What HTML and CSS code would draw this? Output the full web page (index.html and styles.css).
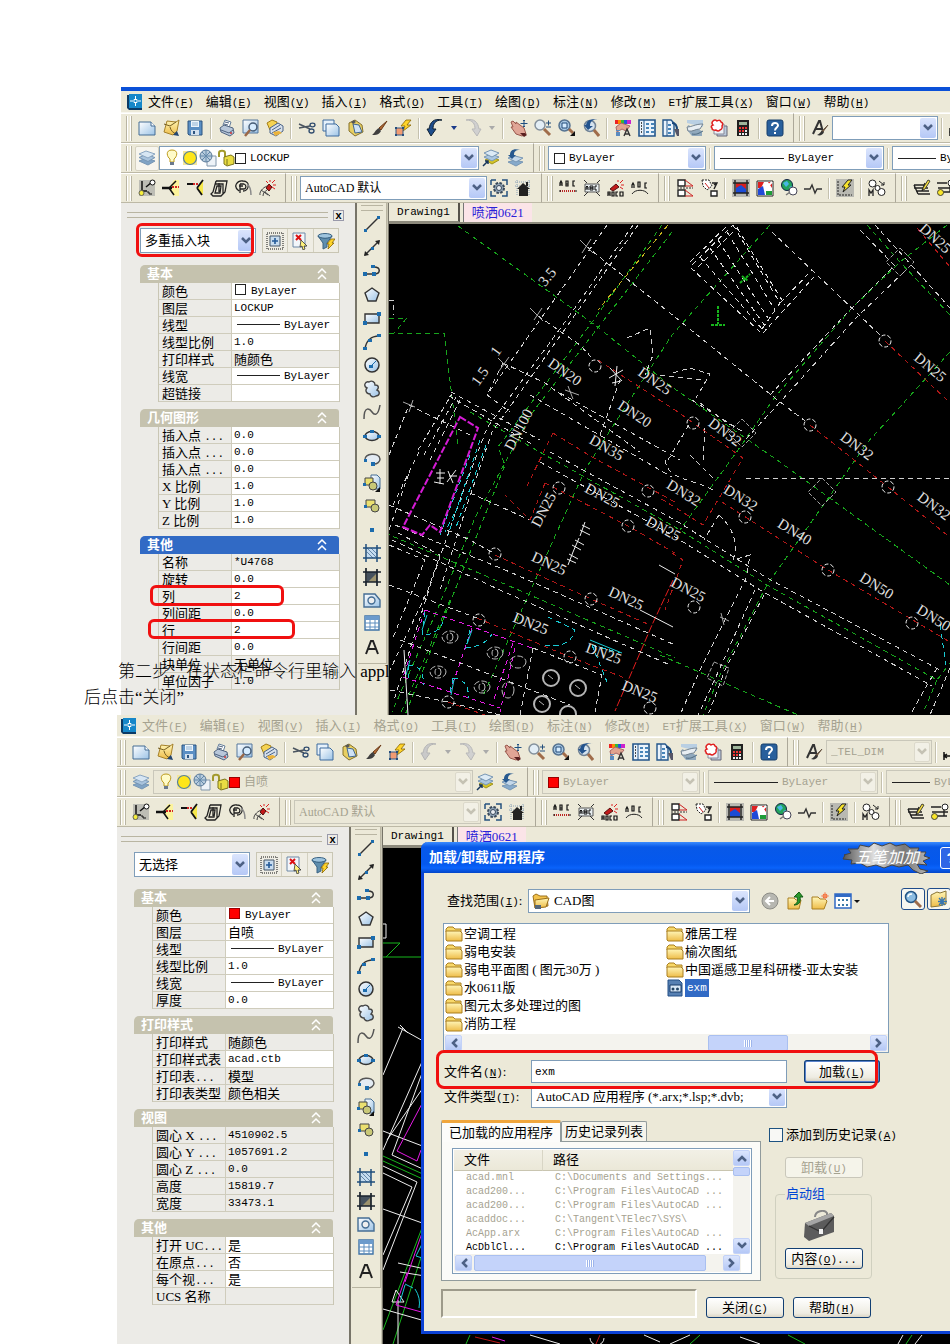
FILE: index.html
```html
<!DOCTYPE html>
<html lang="zh-CN">
<head>
<meta charset="utf-8">
<title>AutoCAD 加载应用程序</title>
<link rel="stylesheet" href="styles.css">
</head>
<body>
<svg class="defs" aria-hidden="true">
<defs>
<linearGradient id="gb" x1="0" y1="0" x2="1" y2="1"><stop offset="0" stop-color="#fff"/><stop offset="1" stop-color="#9cc3e6"/></linearGradient>
<linearGradient id="gf" x1="0" y1="0" x2="0" y2="1"><stop offset="0" stop-color="#fff6b8"/><stop offset="1" stop-color="#eebc48"/></linearGradient>
<linearGradient id="gc" x1="0" y1="0" x2="1" y2="0"><stop offset="0" stop-color="#555"/><stop offset=".35" stop-color="#ddd"/><stop offset=".7" stop-color="#777"/><stop offset="1" stop-color="#bbb"/></linearGradient>
<symbol id="i-app" viewBox="0 0 18 18"><path d="M2 2h13l2 2v13H4l-2-2z" fill="#0b3a66"/><rect x="4" y="1" width="13" height="14" fill="#1687c9"/><path d="M10.500 3v3M10.500 10v3M5 8h3M13 8h3M9 6.500h3v3H9z" stroke="#fff" fill="none"/></symbol>
<symbol id="i-new" viewBox="0 0 18 18"><path d="M1 3h12l4 4v9H1z" fill="url(#gb)" stroke="#456d94"/><path d="M13 3v4h4" fill="#fff" stroke="#456d94"/></symbol>
<symbol id="i-open" viewBox="0 0 18 18"><path d="M5 2l9 1 3-2-2 11-4 4-9-3z" fill="url(#gf)" stroke="#a5812a"/><path d="M2 5l6 2 6-4M8 8c1 4 3 6 7 7" stroke="#765f22" fill="none"/><path d="M11 16l6 1-2-5z" fill="#244771"/></symbol>
<symbol id="i-save" viewBox="0 0 18 18"><path d="M2 2h14v14H3l-1-1z" fill="#5b8fc4" stroke="#2c5480"/><path d="M5 2h8v6H5z" fill="#eef5fb"/><path d="M5 11h8v5H5z" fill="#d3e0ed"/><path d="M7 12h2v3H7z" fill="#2c5480"/><path d="M6 4h6M6 6h6" stroke="#8fb2d3"/></symbol>
<symbol id="i-print" viewBox="0 0 18 18"><path d="M5 6l2-5 6 2-2 6z" fill="#fff" stroke="#667f9c"/><path d="M2 9l4-3 9 3 1 5-4 3-9-4z" fill="#b8c7da" stroke="#506480"/><path d="M3 11l8 3 4-3M7 3l4 1M6 5l4 1" stroke="#506480" fill="none"/><circle cx="13" cy="14" r="1" fill="#c33"/></symbol>
<symbol id="i-preview" viewBox="0 0 18 18"><path d="M1 1h15v13H1z" fill="url(#gb)" stroke="#55779c"/><circle cx="11" cy="8" r="4" fill="#d6ecff" stroke="#465d78" stroke-width="1.500"/><path d="M8 11l-5 6" stroke="#9b6847" stroke-width="2.500"/></symbol>
<symbol id="i-publish" viewBox="0 0 18 18"><path d="M1 4l5-3 5 2-1 6-6 2z" fill="#f5d352" stroke="#a37d16"/><path d="M4 9l8-5 5 3v5l-7 5-6-3z" fill="#d7e0eb" stroke="#4a6387"/><path d="M6 11l8-5M6 14l9-5" stroke="#4a6387"/><path d="M7 13l6-1 3 2-7 3z" fill="#ecb33a"/></symbol>
<symbol id="i-cut" viewBox="0 0 18 18"><path d="M1 5l11 5M1 9l11-2" stroke="#4b5560" stroke-width="1.500"/><ellipse cx="14.500" cy="6" rx="2.500" ry="1.800" fill="none" stroke="#304c6e" stroke-width="1.300"/><ellipse cx="13.500" cy="12" rx="2.500" ry="2" fill="none" stroke="#304c6e" stroke-width="1.300"/></symbol>
<symbol id="i-copy" viewBox="0 0 18 18"><path d="M1 1h11v11H1z" fill="#e6f1fb" stroke="#3c6b9e"/><path d="M4 5h10l3 3v9H4z" fill="url(#gb)" stroke="#3c6b9e"/></symbol>
<symbol id="i-paste" viewBox="0 0 18 18"><path d="M3 4l6-3 7 5 1 7-8 4-6-5z" fill="#e8cf62" stroke="#85702a"/><path d="M7 5l6 1 3 7-7 1z" fill="#cfe2f5" stroke="#3f658d"/><path d="M5 3l3-2 2 2-3 2z" fill="#555"/></symbol>
<symbol id="i-brush" viewBox="0 0 18 18"><path d="M17 2L9 9l2 2z" fill="#b36a35" stroke="#6b3a17"/><path d="M9 9l2 3c-2 4-5 4-9 4 3-2 3-5 7-7z" fill="#3f3f3f"/></symbol>
<symbol id="i-bolt" viewBox="0 0 18 18"><path d="M12 1h5l-4 5h4l-8 6 2-5H7z" fill="#ffd42a" stroke="#886400" stroke-width=".8"/><path d="M2 9h7v7H2z" fill="#f29b72" stroke="#355b86"/><path d="M1 8h2v2H1zM8 8h2v2H8zM1 15h2v2H1zM8 15h2v2H8z" fill="#244c7d"/></symbol>
<symbol id="i-undo" viewBox="0 0 18 18"><path d="M16 1C9 1 7 5 7 10h3l-5 7-4-7h2C4 3 8-1 16 1z" fill="#1d4d8c" stroke="#123"/></symbol>
<symbol id="i-undo-off" viewBox="0 0 18 18"><path d="M16 1C9 1 7 5 7 10h3l-5 7-4-7h2C4 3 8-1 16 1z" fill="#c9c9c9" stroke="#b5b5b5"/></symbol>
<symbol id="i-redo" viewBox="0 0 18 18"><path d="M2 1c7 0 9 4 9 9H8l5 7 4-7h-2c-1-7-5-11-13-9z" fill="#d0d0d0" stroke="#b9b9b9"/></symbol>
<symbol id="i-drop" viewBox="0 0 18 18"><path d="M6 7h6l-3 4z" fill="#1a3a8a"/></symbol>
<symbol id="i-drop-off" viewBox="0 0 18 18"><path d="M6 7h6l-3 4z" fill="#aaa"/></symbol>
<symbol id="i-pan" viewBox="0 0 18 18"><path d="M1 3l2-1 3 3 0-2 4 3 4 3 2 6-4 2-6-2-5-7 2 0z" fill="#e0a596" stroke="#99584d"/><path d="M10 14l5 0 2 2-3 2z" fill="#5a2020"/><path d="M14 1v7M10.500 4.500h7M13 2l1-1 1 1M13 7l1 1 1-1" stroke="#1f4f80" fill="none"/></symbol>
<symbol id="i-zoom" viewBox="0 0 18 18"><circle cx="6" cy="6" r="5" fill="#e3eef6" stroke="#83909c" stroke-width="1.500"/><path d="M10 10l6 6" stroke="#a06c4a" stroke-width="3"/><path d="M12 4h5M14.500 1.500v5M12 8h5" stroke="#244f7c"/></symbol>
<symbol id="i-zoomwin" viewBox="0 0 18 18"><circle cx="6.500" cy="6.500" r="5.500" fill="#a9c9e5" stroke="#567391" stroke-width="1.500"/><path d="M4 4h5v5H4z" fill="#d5ecff" stroke="#234a78"/><path d="M11 10l4 4" stroke="#a06c4a" stroke-width="3"/><path d="M17 12v5h-5z" fill="#111"/></symbol>
<symbol id="i-zoomprev" viewBox="0 0 18 18"><circle cx="8" cy="7" r="5.500" fill="#d5e3ef" stroke="#718396" stroke-width="1.500"/><path d="M17 1c-7-1-9 2-9 6h3l-5 4-4-5h2c1-5 5-7 13-5z" fill="#23538d"/><path d="M12 11l5 6" stroke="#a06c4a" stroke-width="3"/></symbol>
<symbol id="i-props" viewBox="0 0 18 18"><path d="M1 1h3v4H1z" fill="#e22"/><path d="M4 1h3v4H4z" fill="#f80"/><path d="M7 1h3v4H7z" fill="#3b3"/><path d="M10 1h3v4h-3z" fill="#25d"/><path d="M13 1h4v4h-4z" fill="#c2c"/><path d="M2 8l5-4 9 3-4 5-4-2-5 3z" fill="#e2a48f" stroke="#a66"/><path d="M10 17l3-7 3 7M11 15h4" stroke="#333" fill="none" stroke-width="1.400"/><path d="M2 11h4v1H2zM2 13h4v4H2z" fill="#5a8bc0"/></symbol>
<symbol id="i-dc" viewBox="0 0 18 18"><path d="M1 1h16v16H1z" fill="#eaf3fc" stroke="#23568b" stroke-width="1.600"/><path d="M6 1v16" stroke="#23568b"/><path d="M3 4h1M3 7h1M3 10h1M3 13h1" stroke="#111" stroke-width="1.500"/><path d="M8 4h3v2H8zM13 4h3v2h-3zM8 8h3v2H8zM13 8h3v2h-3zM8 12h3v2H8zM13 12h3v2h-3z" fill="#4684b9"/></symbol>
<symbol id="i-tp" viewBox="0 0 18 18"><path d="M1 1h8l3 3v13H1z" fill="#eaf3fc" stroke="#23568b" stroke-width="1.400"/><path d="M5 1v16" stroke="#23568b"/><path d="M6 5h3v2H6zM6 9h3v2H6zM6 13h3v2H6z" fill="#4684b9"/><path d="M10 4c4 0 5 3 5 7" stroke="#1a477a" fill="none" stroke-width="2"/><path d="M12 10h5v7h-2z" fill="#556"/></symbol>
<symbol id="i-sheet" viewBox="0 0 18 18"><path d="M1 1h16v7L1 4z" fill="#b9cfe3"/><path d="M2 6l14 6v5H6L1 11z" fill="#91a9bd"/><path d="M1 8c5 0 8-3 16-3l-3 5c-5 0-7 3-12 2z" fill="#e8eef3" stroke="#738391"/><path d="M6 15c5 1 7-1 11-3" stroke="#4e6a80" fill="none"/></symbol>
<symbol id="i-markup" viewBox="0 0 18 18"><path d="M7 7h10v10H7z" fill="#bccbdc" stroke="#667"/><path d="M4 5h10v10H4z" fill="#eef3f8" stroke="#889"/><path d="M3 2c2-2 4 0 4 0s3-2 4 1c3 1 1 4 1 4s1 3-2 4c-2 2-4 0-4 0s-4 1-4-2c-2-2 1-3 1-3s-2-2 0-4z" fill="#fff" stroke="#e02020" stroke-width="1.500"/></symbol>
<symbol id="i-calc" viewBox="0 0 18 18"><path d="M3 1h12v16H3z" fill="#202020"/><path d="M5 3h8v3H5z" fill="#9eb59b"/><path d="M5 8h2v2H5zM8 8h2v2H8zM11 8h2v2h-2zM5 11h2v2H5zM8 11h2v2H8z" fill="#e33"/><path d="M11 11h2v2h-2zM5 14h2v2H5zM8 14h2v2H8zM11 14h2v2h-2z" fill="#eee"/></symbol>
<symbol id="i-help" viewBox="0 0 18 18"><rect x="1" y="1" width="16" height="16" rx="2" fill="#285f9c" stroke="#173e6b"/><path d="M6 7c0-4 6-4 6-.500 0 2-3 2-3 5M9 13v2" fill="none" stroke="#fff" stroke-width="2"/></symbol>
<symbol id="i-style" viewBox="0 0 18 18"><path d="M2 15L8 2h1l3 11M4 10h7" fill="none" stroke="#333" stroke-width="2"/><path d="M17 6l-7 7 1 1z" fill="#b36a35" stroke="#654"/><path d="M11 12c-2 1-2 3-5 4 3 1 6 0 7-3z" fill="#333"/></symbol>
<symbol id="i-dim" viewBox="0 0 18 18"><path d="M1 9v8M1 13h15M4 11l-3 2 3 2" stroke="#111" stroke-width="1.500" fill="none"/></symbol>
<symbol id="i-layers" viewBox="0 0 18 18"><path d="M1 12l7-3 9 3-7 4z" fill="#7fa3c5" stroke="#7796b4"/><path d="M1 8.500l7-3 9 3-7 4z" fill="#a8c3dd" stroke="#7796b4"/><path d="M1 5l7-3 9 3-7 4z" fill="#d7e6f3" stroke="#8aa6c2"/></symbol>
<symbol id="i-bulb" viewBox="0 0 18 18"><path d="M9 1c-7 0-5 7-2 9v3h4v-3c3-2 5-9-2-9z" fill="#fffbc9" stroke="#bd9b1c"/><path d="M7 13h4v3H7z" fill="#6a788c"/></symbol>
<symbol id="i-sun" viewBox="0 0 18 18"><path d="M2 2h14v14H2z" fill="#f4e79b"/><circle cx="9" cy="9" r="6.500" fill="#ffe619" stroke="#557f9f" stroke-width="1.200"/></symbol>
<symbol id="i-freeze" viewBox="0 0 18 18"><path d="M8 7h9v10H8z" fill="#eef3f8" stroke="#8196ab"/><circle cx="7" cy="7" r="6" fill="#b7cbdc" stroke="#5b7a98"/><path d="M7 1v12M1 7h12M3 3l8 8M11 3l-8 8" stroke="#6388aa"/></symbol>
<symbol id="i-lock" viewBox="0 0 18 18"><path d="M2 8V4c0-3 6-3 6 0v6" fill="none" stroke="#a39a2c" stroke-width="2"/><path d="M7 8l7-2 3 2v7l-7 2-3-2z" fill="#e9dc42" stroke="#7b741c"/><path d="M10 10v6" stroke="#7b741c"/></symbol>
<symbol id="i-laycur" viewBox="0 0 18 18"><path d="M3 11l7-3 7 3-7 4z" fill="#d6c526" stroke="#a0941f"/><path d="M2 8l7-3 8 3-7 4z" fill="#aac6e0" stroke="#7796b4"/><path d="M2 4l7-3 8 3-7 4z" fill="#dceaf5" stroke="#7796b4"/><path d="M1 17l5-5M3 12h3v3" stroke="#17365c" stroke-width="1.500" fill="none"/></symbol>
<symbol id="i-layprev" viewBox="0 0 18 18"><path d="M2 13l7-2 8 2-7 4z" fill="#86aacb" stroke="#7796b4"/><path d="M2 9l7-2 8 2-7 4z" fill="#c4d8ea" stroke="#7796b4"/><path d="M14 1c-5 0-6 2-6 5h2l-4 4-4-4h2c0-5 4-7 10-5z" fill="#27598f"/></symbol>
<symbol id="i-t1" viewBox="0 0 18 18"><path d="M1 1h16v16H1z" fill="#bdbdb5"/><path d="M4 2v10h5M8 8l6-5" stroke="#111" stroke-width="1.500" fill="none"/><circle cx="14.500" cy="3.500" r="2.500" fill="#fff" stroke="#111"/><circle cx="3.500" cy="14" r="2.500" fill="#f7ef3b" stroke="#665"/><path d="M9 13h2v2h3" stroke="#111" fill="none"/></symbol>
<symbol id="i-t2" viewBox="0 0 18 18"><path d="M12 1L7 9l5 8h5V1z" fill="#fcf39b"/><path d="M0 9h10" stroke="#111" stroke-width="2.500"/><path d="M14 2L7 9l5 7" stroke="#111" stroke-width="1.500" fill="none"/><path d="M10 8h7" stroke="#d32424" stroke-width="2" stroke-dasharray="2 1"/></symbol>
<symbol id="i-t3" viewBox="0 0 18 18"><path d="M17 1l-5 8 3 7 2-1z" fill="#f6e84c"/><path d="M1 5h6M11 9l5 7M17 1l-6 8" stroke="#111" stroke-width="1.800"/><path d="M7 5h6" stroke="#d32424" stroke-width="2" stroke-dasharray="2 1"/></symbol>
<symbol id="i-t4" viewBox="0 0 18 18"><path d="M6 2h11l-2 11-2 2M6 2L3 13l-2 2 2 2h8l2-2V5H5M7 7h4l-1 7H5zM9 4v9" stroke="#222" fill="none" stroke-width="1.300"/></symbol>
<symbol id="i-t5" viewBox="0 0 18 18"><path d="M5 12C-2 7 4 1 9 2c8 0 6 10 0 10M6 5v9M6 5h4c3 1 2 5 0 5H6M9 7H5" stroke="#222" fill="none" stroke-width="1.300"/><path d="M13 5c3 2 4 6 4 11" stroke="#8b8b8b" fill="none" stroke-width="1.500"/></symbol>
<symbol id="i-t6" viewBox="0 0 18 18"><path d="M2 16c-1-4 5-9 8-9M5 17c0-3 2-5 4-6M7 13l5 4M3 11l7 5" stroke="#444" fill="none"/><path d="M8 9l3-4 3 3-3 4z" fill="#c21919" stroke="#511"/><path d="M12 3V1M14 4l3-3M15 6h3M14 8l3 2M10 4L8 2" stroke="#d22"/></symbol>
<symbol id="i-gear" viewBox="0 0 18 18"><path d="M1 1h5M1 1v5M12 1h5v5M1 12v5h5M17 12v5h-5" stroke="#24517f" stroke-width="1.500" fill="none"/><circle cx="9" cy="9" r="5" fill="#93a7b9" stroke="#39495a" stroke-width="2" stroke-dasharray="2.500 1.400"/><circle cx="9" cy="9" r="2.500" fill="#e9eef2" stroke="#39495a"/></symbol>
<symbol id="i-home" viewBox="0 0 18 18"><path d="M1 3h16M1 7h16M3 1v16M15 1v16" stroke="#8aa1b6" stroke-dasharray="1 1"/><path d="M9 4L3 10h2v7h9v-7h2z" fill="#222"/><path d="M12 3h2v4h-2z" fill="#222"/></symbol>
<symbol id="i-abc1" viewBox="0 0 18 18"><path d="M1 7V4l1-2 1 2v3M1 5h2M7 2v5h2V5H7h2V2zM16 2h-2v5h2" stroke="#111" fill="none" stroke-width="1.200"/><path d="M1 12h16" stroke="#b22" stroke-width="2" stroke-dasharray="1 1"/><path d="M1 11v2M17 11v2" stroke="#111"/></symbol>
<symbol id="i-abc2" viewBox="0 0 18 18"><path d="M2 5h14v8H2z" fill="#e8eef0" stroke="#555"/><path d="M3 11V8l1-1 1 1v3M3 9h2M7 7v4h3V9H7h3V7zM14 7h-2v4h2" stroke="#111" fill="none"/><path d="M1 1l3 3M17 1l-3 3M1 17l4-4M17 17l-4-4" stroke="#333"/></symbol>
<symbol id="i-abc3" viewBox="0 0 18 18"><path d="M3 10l6-5 3 3-6 4z" fill="#c21919" stroke="#511"/><path d="M11 3V1M13 4l3-3M14 6h3M13 8l3 2" stroke="#d22"/><path d="M1 17v-4h2v4M1 15h2M5 13v4h2v-4zM11 13H9v4h2M13 13v4h3v-4z" stroke="#111" fill="none" stroke-width="1.200"/></symbol>
<symbol id="i-abc4" viewBox="0 0 18 18"><path d="M1 9V6l1-2 1 2v3M7 3v5h2V3zM16 4h-2v5h2" stroke="#111" fill="none" stroke-width="1.200"/><path d="M1 15c3-5 13-5 16 0" stroke="#222" fill="none"/></symbol>
<symbol id="i-mir" viewBox="0 0 18 18"><path d="M2 1h7v6H2zM2 11h7v6H2z" fill="#fff" stroke="#222" stroke-width="1.400"/><path d="M9 1l8 6H9M9 11l8 6H9" stroke="#c22" fill="none"/><path d="M1 9h16" stroke="#333" stroke-dasharray="2 1"/></symbol>
<symbol id="i-rot" viewBox="0 0 18 18"><path d="M2 1l7 0 3 6-5 4-4-4z" fill="#fff" stroke="#222" stroke-dasharray="2 1"/><path d="M5 4l4 5" stroke="#c22"/><path d="M11 12h6v5h-6z" fill="#fff" stroke="#222" stroke-width="1.400"/><path d="M14 10l3-6-5 0M17 4l-3 2" stroke="#222" fill="none" stroke-width="1.400"/></symbol>
<symbol id="i-img1" viewBox="0 0 18 18"><path d="M0 0h18v18H0z" fill="#b9b9b2"/><path d="M4 4h10v10H4z" fill="#d91d1d"/><path d="M4 9l5-3 5 4v4H4z" fill="#1b4bd6"/><path d="M3 1v16M15 1v16M1 4h16M1 14h16" stroke="#222" stroke-width="1.400"/></symbol>
<symbol id="i-img2" viewBox="0 0 18 18"><path d="M1 2h16v15H1z" fill="#fff" stroke="#222"/><path d="M2 3h6l-3 6H2zM12 3h4v6z" fill="#dd2020"/><path d="M2 10l5-3 2 9H2z" fill="#2049d8"/><path d="M10 12h6v4h-6z" fill="#1d9c38"/><path d="M9 10l7-7" stroke="#fff" stroke-width="2"/></symbol>
<symbol id="i-globe" viewBox="0 0 18 18"><circle cx="7" cy="6" r="5.500" fill="#23a35c" stroke="#124"/><path d="M3 4l4-2 2 3-3 3zM9 8l3-1-1 3z" fill="#47b7e6"/><circle cx="13" cy="12" r="4" fill="#fff" stroke="#445"/><path d="M10 13l-4 3" stroke="#777" stroke-width="1.500"/></symbol>
<symbol id="i-pulse" viewBox="0 0 18 18"><path d="M0 10h6l2-4 3 8 2-4h5" fill="none" stroke="#333" stroke-width="1.400"/></symbol>
<symbol id="i-flash" viewBox="0 0 18 18"><path d="M0 0h18v18H0z" fill="#b9b9b2"/><path d="M2 2v14h14" stroke="#222" stroke-dasharray="2 1" fill="none"/><path d="M12 1h4l-4 5h3l-8 7 2-5H6z" fill="#f8e42a" stroke="#222"/></symbol>
<symbol id="i-mo" viewBox="0 0 18 18"><circle cx="4.500" cy="4.500" r="3.500" fill="#fff" stroke="#222"/><path d="M1 17v-6l2 3 2-3v6" fill="none" stroke="#222" stroke-width="1.300"/><circle cx="13.500" cy="13" r="3.500" fill="#fff" stroke="#222"/><circle cx="9.500" cy="9" r="2.500" fill="#fff" stroke="#222"/><path d="M11 2l5 4M16 3v3h-3" stroke="#222" fill="none"/></symbol>
<symbol id="i-edit1" viewBox="0 0 18 18"><path d="M1 6h11M1 9h14M3 12h13M5 15h12M1 6l4 9M12 4l-3 8" stroke="#222" fill="none" stroke-width="1.400"/><path d="M15 1l2 1-5 8-2 1 0-2z" fill="#f8df3c" stroke="#443"/></symbol>
<symbol id="i-edit2" viewBox="0 0 18 18"><path d="M0 4h10M1 9h16M4 13h12M13 1v12" stroke="#222" stroke-width="1.400"/><circle cx="14" cy="4" r="3" fill="#fff" stroke="#222"/><circle cx="3.500" cy="13.500" r="3" fill="#f8e52a" stroke="#443"/></symbol>
<symbol id="i-line" viewBox="0 0 18 18"><path d="M2 16L16 2" stroke="#333" stroke-width="1.500"/><path d="M1 14h3v3H1zM14 1h3v3h-3z" fill="#1c6cad"/></symbol>
<symbol id="i-xline" viewBox="0 0 18 18"><path d="M2 16L16 2" stroke="#333" stroke-width="1.500"/><path d="M1 17l1-5 4 4zM17 1l-5 1 4 4z" fill="#222"/><path d="M8 8h3v3H8z" fill="#1c6cad"/></symbol>
<symbol id="i-pline" viewBox="0 0 18 18"><path d="M2 12h9c7 0 7-7 0-7H9" stroke="#333" stroke-width="1.500" fill="none"/><path d="M0 10h4v4H0zM9 10h4v4H9zM8 3h4v3H8z" fill="#1c6cad"/></symbol>
<symbol id="i-poly" viewBox="0 0 18 18"><path d="M9 2l7 5-3 8H5L2 7z" fill="url(#gb)" stroke="#333" stroke-width="1.400"/></symbol>
<symbol id="i-rect" viewBox="0 0 18 18"><path d="M2 5h14v9H2z" fill="url(#gb)" stroke="#333" stroke-width="1.400"/><path d="M0 12h4v4H0zM14 3h4v4h-4z" fill="#1c6cad"/></symbol>
<symbol id="i-arc" viewBox="0 0 18 18"><path d="M2 16C3 8 8 3 16 3" stroke="#333" stroke-width="1.500" fill="none"/><path d="M0 14h4v3H0zM5 6h4v3H5zM14 1h4v3h-4z" fill="#1c6cad"/></symbol>
<symbol id="i-circ" viewBox="0 0 18 18"><circle cx="9" cy="9" r="7" fill="url(#gb)" stroke="#333" stroke-width="1.500"/><path d="M8 10l5-5" stroke="#1c6cad"/><path d="M6 9h4v3H6z" fill="#1c6cad"/></symbol>
<symbol id="i-cloud" viewBox="0 0 18 18"><path d="M4 8C0 6 2 1 6 2c3-2 6 0 6 3 4 0 4 3 2 5 4 2 2 6-1 6-3 2-6 0-6-2-4 0-5-4-3-6z" fill="url(#gb)" stroke="#444" stroke-width="1.400"/></symbol>
<symbol id="i-spline" viewBox="0 0 18 18"><path d="M1 16C1 2 7 6 9 9s6 5 8-7" fill="none" stroke="#555" stroke-width="1.500"/></symbol>
<symbol id="i-ell" viewBox="0 0 18 18"><ellipse cx="9" cy="9" rx="7" ry="4.500" fill="url(#gb)" stroke="#333" stroke-width="1.500"/><path d="M0 8h4v3H0zM14 8h4v3h-4zM7 3h4v3H7z" fill="#1c6cad"/></symbol>
<symbol id="i-ellarc" viewBox="0 0 18 18"><path d="M2 10c-1-7 14-8 15-1 0 3-3 5-6 5" fill="#e3ebf3" stroke="#555" stroke-width="1.500"/><path d="M1 9h3v3H1zM8 12h4v4H8z" fill="#1c6cad"/></symbol>
<symbol id="i-ins" viewBox="0 0 18 18"><path d="M8 1h6l3 3v11H8z" fill="url(#gb)" stroke="#456d94"/><path d="M2 4h8v7H2z" fill="#ebe06f" stroke="#444"/><circle cx="10" cy="12" r="4" fill="#c9c877" stroke="#444"/><path d="M0 9h3v3H0z" fill="#1c6cad"/><path d="M17 13v5h-5z" fill="#111"/></symbol>
<symbol id="i-blk" viewBox="0 0 18 18"><path d="M3 3h9v7H3z" fill="#ebe06f" stroke="#444"/><circle cx="12" cy="11" r="4" fill="#c9c877" stroke="#444"/><path d="M1 8h3v3H1z" fill="#1c6cad"/></symbol>
<symbol id="i-pt" viewBox="0 0 18 18"><path d="M7 7h4v4H7z" fill="#1c6cad"/></symbol>
<symbol id="i-hatch" viewBox="0 0 18 18"><path d="M4 4h10v10H4z" fill="#c5dcf0"/><path d="M4 8l6 6M4 4l10 10M8 4l6 6" stroke="#6486a8"/><path d="M3 0v18M14 1v17M0 4h18M0 14h18" stroke="#1f4e7c" stroke-width="1.500"/></symbol>
<symbol id="i-grad" viewBox="0 0 18 18"><path d="M4 4h10v10H4z" fill="#46525e"/><path d="M14 5v9H5z" fill="#9d936d"/><path d="M3 0v18M14 1v17M0 4h18M0 14h18" stroke="#19222c" stroke-width="1.700"/></symbol>
<symbol id="i-region" viewBox="0 0 18 18"><path d="M1 3h11l5 6v7H1z" fill="url(#gb)" stroke="#456d94" stroke-width="1.400"/><circle cx="8.500" cy="9.500" r="3.500" fill="#eee" stroke="#456d94" stroke-width="1.400"/></symbol>
<symbol id="i-table" viewBox="0 0 18 18"><path d="M2 2h14v14H2z" fill="#fff" stroke="#3f73a7" stroke-width="1.400"/><path d="M2 2h14v4H2z" fill="#6c9bcc"/><path d="M2 9h14M2 13h14M7 6v10M12 6v10" stroke="#5d8dbe"/></symbol>
<symbol id="i-mtext" viewBox="0 0 18 18"><path d="M3 16L8 3h2l5 13M5 11h8" fill="none" stroke="#222" stroke-width="2"/></symbol>
<symbol id="i-pick" viewBox="0 0 18 18"><path d="M1 1h16v16H1z" fill="none" stroke="#111" stroke-dasharray="1 1"/><path d="M4 4h10v10H4z" fill="#c7dcf0" stroke="#456"/><path d="M9 6v6M6 9h6" stroke="#245a98" stroke-width="1.600"/></symbol>
<symbol id="i-sel" viewBox="0 0 18 18"><path d="M2 1h12v14H2z" fill="#f2f6fa" stroke="#6c88a6"/><path d="M5 3l5 5M10 3L5 8" stroke="#d11" stroke-width="2"/><path d="M10 8l6 6-3 0 1 3-2 1-1-4-2 1z" fill="#fff27a" stroke="#333" stroke-width=".8"/></symbol>
<symbol id="i-filter" viewBox="0 0 18 18"><ellipse cx="8" cy="4" rx="7" ry="2.500" fill="#9ec4de" stroke="#3a6384"/><path d="M1 4l5 7v6l4-2v-4l5-7c-2 3-12 3-14 0z" fill="#5f8eae" stroke="#3a6384"/><path d="M14 7h4l-3 4h2l-6 6 1-5h-2z" fill="#ffd42a" stroke="#886400" stroke-width=".8"/></symbol>
<symbol id="i-folder" viewBox="0 0 18 18"><path d="M1 4l2-2h5l2 2h6v3H1z" fill="#f8d869" stroke="#a97f20"/><path d="M1 6h14l2 2v8H2l-1-1z" fill="url(#gf)" stroke="#a97f20"/></symbol>
<symbol id="i-fopen" viewBox="0 0 18 18"><path d="M1 4l3-2 4 2h7l1 10-13 2z" fill="#f3c24b" stroke="#9b701c"/><path d="M3 8l14-2-3 9-11 1z" fill="url(#gf)" stroke="#9b701c"/><path d="M3 13h6v4H3z" fill="#55677b"/></symbol>
<symbol id="i-back" viewBox="0 0 18 18"><circle cx="9" cy="9" r="8" fill="#b7b7b1" stroke="#8d8d87"/><path d="M13 9H5M9 5L5 9l4 4" stroke="#fff" stroke-width="2" fill="none"/></symbol>
<symbol id="i-up" viewBox="0 0 18 18"><path d="M2 6h6l2 2h5l-2 9H2z" fill="url(#gf)" stroke="#a97f20"/><path d="M8 13c4-2 4-5 3-8H8l5-5 4 5h-3c1 5-1 8-6 8z" fill="#29992c" stroke="#125c15"/></symbol>
<symbol id="i-newf" viewBox="0 0 18 18"><path d="M1 5h6l2 2h5l2 2-3 8H1z" fill="url(#gf)" stroke="#a97f20"/><circle cx="14" cy="4" r="2.500" fill="#f56b34"/><path d="M14 0v8M10 4h8" stroke="#f29870"/></symbol>
<symbol id="i-views" viewBox="0 0 18 18"><path d="M1 2h16v14H1z" fill="#fff" stroke="#316ac5" stroke-width="1.500"/><path d="M1 2h16v3H1z" fill="#316ac5"/><path d="M4 7h2v2H4zM8 7h2v2H8zM12 7h2v2h-2zM4 12h2v2H4zM8 12h2v2H8zM12 12h2v2h-2z" fill="#3c79a6"/></symbol>
<symbol id="i-find" viewBox="0 0 18 18"><circle cx="7" cy="7" r="5.500" fill="#8dbde2" stroke="#245585" stroke-width="1.500"/><path d="M11 11l6 6" stroke="#9e6b4a" stroke-width="3"/><path d="M4 7c0-2 2-3 4-3" stroke="#fff" fill="none" stroke-width="1.500"/></symbol>
<symbol id="i-fav" viewBox="0 0 18 18"><path d="M1 5l6-3 3 1 6-2v13l-7 2-8 1z" fill="url(#gf)" stroke="#8b7533"/><path d="M12 7v9M8 11.500h9M9 8l6 7M15 8l-6 7" stroke="#3775b1" stroke-width="1.300"/></symbol>
<symbol id="i-file" viewBox="0 0 18 18"><path d="M2 1h11l3 3v13H2z" fill="#5680b3" stroke="#234f86"/><path d="M4 6h11v7H4z" fill="#d7e7f7" stroke="#173b69"/><circle cx="7" cy="10" r="1.500" fill="#246"/><circle cx="11.500" cy="10" r="1.500" fill="#246"/></symbol>
<symbol id="i-case" viewBox="0 0 32 32"><path d="M12 7c0-6 9-8 12-4v4" fill="none" stroke="#888" stroke-width="2"/><path d="M2 13L28 3l3 3v16L6 31l-5-4z" fill="#5c5c5c"/><path d="M2 13L28 3l3 3L6 16z" fill="#a5a5a5"/><path d="M6 16l12 6 13-15" fill="none" stroke="#333" stroke-width="1.300"/><path d="M16 19h4v5h-4z" fill="#f2f2f2"/></symbol>
<symbol id="c-down" viewBox="0 0 10 8"><path d="M1 1l4 4 4-4" fill="none" stroke="currentColor" stroke-width="2.500"/></symbol>
<symbol id="c-dbl" viewBox="0 0 10 12"><path d="M1 5l4-4 4 4M1 11l4-4 4 4" fill="none" stroke="currentColor" stroke-width="1.500"/></symbol>
</defs>
</svg>

<main class="page">
<section class="shot shot-a">
<div class="titleline"></div>
<nav class="menu">
<svg class="ic"><use href="#i-app"/></svg>
<button>文件<span>(<u>F</u>)</span></button><button>编辑<span>(<u>E</u>)</span></button><button>视图<span>(<u>V</u>)</span></button><button>插入<span>(<u>I</u>)</span></button><button>格式<span>(<u>O</u>)</span></button><button>工具<span>(<u>T</u>)</span></button><button>绘图<span>(<u>D</u>)</span></button><button>标注<span>(<u>N</u>)</span></button><button>修改<span>(<u>M</u>)</span></button><button><span>ET</span>扩展工具<span>(<u>X</u>)</span></button><button>窗口<span>(<u>W</u>)</span></button><button>帮助<span>(<u>H</u>)</span></button>
</nav>
<div class="bar">
<div class="band"><i class="grip"></i>
<button class="tb" aria-label="新建"><svg><use href="#i-new"/></svg></button><button class="tb" aria-label="打开"><svg><use href="#i-open"/></svg></button><button class="tb" aria-label="保存"><svg><use href="#i-save"/></svg></button><i class="sep"></i>
<button class="tb" aria-label="打印"><svg><use href="#i-print"/></svg></button><button class="tb" aria-label="预览"><svg><use href="#i-preview"/></svg></button><button class="tb" aria-label="发布"><svg><use href="#i-publish"/></svg></button><i class="sep"></i>
<button class="tb" aria-label="剪切"><svg><use href="#i-cut"/></svg></button><button class="tb" aria-label="复制"><svg><use href="#i-copy"/></svg></button><button class="tb" aria-label="粘贴"><svg><use href="#i-paste"/></svg></button><button class="tb" aria-label="特性匹配"><svg><use href="#i-brush"/></svg></button><button class="tb" aria-label="块编辑"><svg><use href="#i-bolt"/></svg></button><i class="sep"></i>
<button class="tb" aria-label="放弃"><svg><use href="#i-undo"/></svg></button><button class="tb slim" aria-label="放弃列表"><svg><use href="#i-drop"/></svg></button><button class="tb" aria-label="重做"><svg><use href="#i-redo"/></svg></button><button class="tb slim" aria-label="重做列表"><svg><use href="#i-drop-off"/></svg></button><i class="sep"></i>
<button class="tb" aria-label="平移"><svg><use href="#i-pan"/></svg></button><button class="tb" aria-label="缩放"><svg><use href="#i-zoom"/></svg></button><button class="tb" aria-label="窗口缩放"><svg><use href="#i-zoomwin"/></svg></button><button class="tb" aria-label="上一个"><svg><use href="#i-zoomprev"/></svg></button><i class="sep"></i>
<button class="tb" aria-label="特性"><svg><use href="#i-props"/></svg></button><button class="tb" aria-label="设计中心"><svg><use href="#i-dc"/></svg></button><button class="tb" aria-label="工具选项板"><svg><use href="#i-tp"/></svg></button><button class="tb" aria-label="图纸集"><svg><use href="#i-sheet"/></svg></button><button class="tb" aria-label="标记集"><svg><use href="#i-markup"/></svg></button><button class="tb" aria-label="计算器"><svg><use href="#i-calc"/></svg></button><i class="sep"></i>
<button class="tb" aria-label="帮助"><svg><use href="#i-help"/></svg></button></div>
<div class="band"><i class="grip"></i><button class="tb" aria-label="文字样式"><svg><use href="#i-style"/></svg></button>
<div class="combo w105"><select aria-label="样式"><option></option></select><b class="arr"><svg><use href="#c-down"/></svg></b></div><i class="sep"></i><button class="tb" aria-label="标注样式"><svg><use href="#i-dim"/></svg></button></div>
</div>
<div class="bar">
<div class="band"><i class="grip"></i><button class="tb raised" aria-label="图层"><svg><use href="#i-layers"/></svg></button>
<div class="combo w320"><svg class="st"><use href="#i-bulb"/></svg><svg class="st"><use href="#i-sun"/></svg><svg class="st"><use href="#i-freeze"/></svg><svg class="st"><use href="#i-lock"/></svg><i class="sw"></i><select aria-label="图层"><option>LOCKUP</option></select><b class="arr"><svg><use href="#c-down"/></svg></b></div>
<button class="tb" aria-label="置为当前"><svg><use href="#i-laycur"/></svg></button><button class="tb" aria-label="上一个图层"><svg><use href="#i-layprev"/></svg></button></div>
<div class="band"><i class="grip"></i>
<div class="combo w160"><i class="sw"></i><select aria-label="颜色"><option>ByLayer</option></select><b class="arr"><svg><use href="#c-down"/></svg></b></div><i class="sep"></i>
<div class="combo w170"><i class="ln long"></i><select aria-label="线型"><option>ByLayer</option></select><b class="arr"><svg><use href="#c-down"/></svg></b></div><i class="sep"></i>
<div class="combo w160"><i class="ln"></i><select aria-label="线宽"><option>ByLayer</option></select><b class="arr"><svg><use href="#c-down"/></svg></b></div></div>
</div>
<div class="bar">
<div class="band"><i class="grip"></i><button class="tb" aria-label="工具一"><svg><use href="#i-t1"/></svg></button><button class="tb" aria-label="工具二"><svg><use href="#i-t2"/></svg></button><button class="tb" aria-label="工具三"><svg><use href="#i-t3"/></svg></button><button class="tb" aria-label="工具四"><svg><use href="#i-t4"/></svg></button><button class="tb" aria-label="工具五"><svg><use href="#i-t5"/></svg></button><button class="tb" aria-label="工具六"><svg><use href="#i-t6"/></svg></button></div>
<div class="band"><i class="grip"></i><div class="combo mixed w187"><select aria-label="工作空间"><option>AutoCAD 默认</option></select><b class="arr"><svg><use href="#c-down"/></svg></b></div><button class="tb" aria-label="设置"><svg><use href="#i-gear"/></svg></button><button class="tb" aria-label="主页"><svg><use href="#i-home"/></svg></button></div>
<div class="band"><i class="grip"></i><button class="tb" aria-label="文字一"><svg><use href="#i-abc1"/></svg></button><button class="tb" aria-label="文字二"><svg><use href="#i-abc2"/></svg></button><button class="tb" aria-label="文字三"><svg><use href="#i-abc3"/></svg></button><button class="tb" aria-label="文字四"><svg><use href="#i-abc4"/></svg></button></div>
<div class="band"><i class="grip"></i><button class="tb" aria-label="镜像"><svg><use href="#i-mir"/></svg></button><button class="tb" aria-label="旋转"><svg><use href="#i-rot"/></svg></button><i class="sep"></i><button class="tb" aria-label="图像一"><svg><use href="#i-img1"/></svg></button><button class="tb" aria-label="图像二"><svg><use href="#i-img2"/></svg></button><button class="tb" aria-label="查找"><svg><use href="#i-globe"/></svg></button><button class="tb" aria-label="折断线"><svg><use href="#i-pulse"/></svg></button><i class="sep"></i><button class="tb" aria-label="快速选择"><svg><use href="#i-flash"/></svg></button><i class="sep"></i><button class="tb" aria-label="移动"><svg><use href="#i-mo"/></svg></button></div>
<div class="band"><i class="grip"></i><button class="tb" aria-label="编辑一"><svg><use href="#i-edit1"/></svg></button><button class="tb" aria-label="编辑二"><svg><use href="#i-edit2"/></svg></button></div>
</div>
<div class="work">
<aside class="palette">
<div class="pgrip"><i></i><button aria-label="关闭">x</button></div>
<div class="pick"><div class="combo mixed w116"><select aria-label="选择对象"><option>多重插入块</option></select><b class="arr"><svg><use href="#c-down"/></svg></b><i class="mark mark-sel"></i></div>
<div class="pbtns"><button aria-label="拾取"><svg><use href="#i-pick"/></svg></button><button aria-label="选择"><svg><use href="#i-sel"/></svg></button><button aria-label="快速选择"><svg><use href="#i-filter"/></svg></button></div></div>
<h3>基本<svg><use href="#c-dbl"/></svg></h3>
<table><tr><th>颜色</th><td class="m"><i class="sw"></i>ByLayer</td></tr><tr><th>图层</th><td class="m">LOCKUP</td></tr><tr><th>线型</th><td class="m"><i class="ln"></i>ByLayer</td></tr><tr><th>线型比例</th><td class="m">1.0</td></tr><tr><th>打印样式</th><td class="ro">随颜色</td></tr><tr><th>线宽</th><td class="m"><i class="ln"></i>ByLayer</td></tr><tr><th>超链接</th><td></td></tr></table>
<h3>几何图形<svg><use href="#c-dbl"/></svg></h3>
<table><tr><th>插入点 <span>...</span></th><td class="m">0.0</td></tr><tr><th>插入点 <span>...</span></th><td class="m">0.0</td></tr><tr><th>插入点 <span>...</span></th><td class="m">0.0</td></tr><tr><th>X 比例</th><td class="m">1.0</td></tr><tr><th>Y 比例</th><td class="m">1.0</td></tr><tr><th>Z 比例</th><td class="m">1.0</td></tr></table>
<h3 class="on">其他<svg><use href="#c-dbl"/></svg></h3>
<table><tr><th>名称</th><td class="m ro">*U4768</td></tr><tr><th>旋转</th><td class="m">0.0</td></tr><tr><th>列<i class="mark mark-col"></i></th><td class="m">2</td></tr><tr><th>列间距</th><td class="m">0.0</td></tr><tr><th>行<i class="mark mark-row"></i></th><td class="m">2</td></tr><tr><th>行间距</th><td class="m">0.0</td></tr><tr><th>块单位</th><td class="ro">无单位</td></tr><tr><th>单位因子</th><td class="m ro">1.0</td></tr></table>
</aside>
<div class="vside"><div class="vbar"><i class="vgrip"></i>
<button aria-label="直线"><svg><use href="#i-line"/></svg></button><button aria-label="构造线"><svg><use href="#i-xline"/></svg></button><button aria-label="多段线"><svg><use href="#i-pline"/></svg></button><button aria-label="多边形"><svg><use href="#i-poly"/></svg></button><button aria-label="矩形"><svg><use href="#i-rect"/></svg></button><button aria-label="圆弧"><svg><use href="#i-arc"/></svg></button><button aria-label="圆"><svg><use href="#i-circ"/></svg></button><button aria-label="修订云线"><svg><use href="#i-cloud"/></svg></button><button aria-label="样条曲线"><svg><use href="#i-spline"/></svg></button><button aria-label="椭圆"><svg><use href="#i-ell"/></svg></button><button aria-label="椭圆弧"><svg><use href="#i-ellarc"/></svg></button><button aria-label="插入块"><svg><use href="#i-ins"/></svg></button><button aria-label="创建块"><svg><use href="#i-blk"/></svg></button><button aria-label="点"><svg><use href="#i-pt"/></svg></button><button aria-label="图案填充"><svg><use href="#i-hatch"/></svg></button><button aria-label="渐变色"><svg><use href="#i-grad"/></svg></button><button aria-label="面域"><svg><use href="#i-region"/></svg></button><button aria-label="表格"><svg><use href="#i-table"/></svg></button><button aria-label="多行文字"><svg><use href="#i-mtext"/></svg></button></div></div>
<div class="doc"><div class="tabs"><button>Drawing1</button><button class="on">喷洒0621</button></div>
<div class="canvas"><svg width="561" height="491" viewBox="389 224 561 491" fill="none">
<g stroke-dasharray="5 4" shape-rendering="crispEdges">
<path stroke="#17a51c" d="M458 226L595 325L672 387L777 460L950 585M389 333H444L458 445M389 318H407L394 333M662 225L590 325L498 447L505 465L405 715M672 232L532 413L475 518L438 608L392 712M770 225L672 335L602 443L585 470L482 698M947 225L900 262L852 308L775 397L738 450L680 530M867 225L900 262L950 315M950 352L867 443L767 585L720 675L703 715M385 533L500 582L675 658M660 655L798 715M470 412L545 455L675 527L767 585L937 680L950 663M937 680L923 713M450 600L400 715"/>
<path stroke="#cfcfcf" d="M607 225L487 395M633 225L565 322L487 428L460 500L432 580L394 700M638 225L570 322L492 432L467 505L440 590M612 267L675 317L775 398L805 421M772 232L880 335M586 246L612 267M538 316L580 345L592 358M503 363L545 383L640 452M503 363L487 395L510 412M451 392L540 440M449 396L535 446M389 455L409 405L470 435M418 450L452 394M424 455L456 397M430 460L460 400M393 505L420 450M389 530L410 470M860 230L897 268M875 225L905 258L950 308M892 268L845 315L768 397M904 272L856 318L782 400L745 440M395 525L510 572L675 645M392 540L500 590L670 665M550 452L675 520L767 578L940 670M540 462L672 535L760 590L932 686M755 590L710 690L698 715M764 595L725 670L708 715M746 578L700 670L680 715M937 668L910 715M950 668L930 715M389 505L470 540L495 554M389 585L477 618M400 640L570 705M390 690L448 702L500 715M398 533L440 555L428 590L390 670M389 545L425 560L392 640M470 493L530 520M530 395L672 477M560 393L680 460M600 435L620 380M627 338L650 328L653 355L645 375M673 373L690 368L710 374L696 398M689 425L668 460M705 428L703 460M692 400L735 427M533 648L602 675L595 712M533 648L520 715M719 515C735 530 738 545 733 560L750 555L747 573M719 515L704 540M746 478H950M700 403L726 422L745 433M660 375L705 380M665 460C668 480 690 478 713 490M690 455L713 478M389 300H393V315"/>
<path stroke="#ddd" d="M733 225L780 303L760 332L690 267ZM727 232L775 310M718 240L768 318M710 248L765 326M700 257L762 329M737 228L785 305M780 303L812 270M763 333L814 277M690 262L733 220M698 267L738 227"/>
<path stroke="#b01717" d="M598 360L675 410L743 458L703 525L660 498M553 433L592 457L675 502M553 433L525 490M495 555L591 599L650 625M545 483L628 526L675 553M477 618L570 657L625 678M722 502L828 570L950 642M810 425L848 455L888 487L947 535M885 341L950 403M917 228L950 267M448 702L485 715M545 483L530 520L505 495M672 553L683 560L665 610"/>
<path stroke="#c6b21e" d="M668 225L598 310"/>
<path stroke="#e51be5" d="M425 610L532 648M472 628L450 692M513 643L493 702M403 677L500 708M425 610L403 677M515 648L500 712"/>
<path stroke="#19cbd4" d="M480 440L448 535M486 445L455 530M470 455L440 535M462 498L445 532M425 612L422 635Q440 635 445 617M470 630L466 648Q485 646 492 634M408 665L408 678M408 665Q425 665 423 685M453 678Q470 680 468 698M453 678L450 692M548 617L575 630Q570 650 540 645M592 645L620 653M592 645L607 682M940 625L946 665"/>
</g>
<path stroke="#d51bd5" stroke-width="2" stroke-dasharray="7 2" d="M460 417L478 428L470 450L440 532L430 525L422 535L403 527Z"/>
<g stroke="#eee"><path stroke="#e31d1d" stroke-dasharray="8 2" d="M673 580L652 625L615 711"/><path d="M640 610L673 627M659 565L675 574M404 650L408 715"/><path stroke="#19cbd4" d="M427 615L422 630M472 630L467 644M454 680L451 695M590 640L622 653M410 660L406 675"/>
<path d="M580 240l13 13M582 253l9-14M530 308l13 13M534 320l8-12M498 358l12 12M499 371l10-14M403 402l12 5M409 412l4-12M565 390l14 5M573 399l-5-13M720 617l9 4M724 625l-3-12" stroke="#aaa"/>
<path d="M436 473h9M437 478h7M440 469v15M434 482l10 2M448 471l5 12M456 470l-9 12M449 476h8M582 525l8 4M580 530l10 5M585 522l-5 14M575 540l9 5M572 545l9 5M579 538l-6 14M569 554l9 5M567 559l9 4M573 552l-5 13M610 368l12 13M609 378l14-8M612 383l9-2M617 366l-2 20"/></g>
<g stroke="#eee" stroke-dasharray="4 2"><circle cx="885" cy="341" r="6"/><circle cx="810" cy="425" r="6"/><circle cx="693" cy="423" r="6"/><circle cx="495" cy="554" r="6"/><circle cx="591" cy="599" r="6"/><circle cx="479" cy="620" r="6"/><circle cx="570" cy="657" r="6"/><circle cx="628" cy="526" r="6"/><circle cx="648" cy="491" r="6"/><circle cx="559" cy="488" r="6"/><circle cx="888" cy="487" r="6"/><circle cx="745" cy="517" r="6"/><circle cx="828" cy="570" r="6"/><circle cx="912" cy="623" r="6"/><circle cx="694" cy="607" r="6"/><circle cx="595" cy="366" r="6"/><circle cx="448" cy="702" r="6"/><circle cx="650" cy="708" r="6"/>
<path d="M900 248l14 14-14 14-14-14zM742 419l14 14-14 14-14-14zM822 478l14 14-14 14-14-14zM714 662l15 6-6 18-16-8z" stroke="#aaa"/></g>
<g stroke="#b5b5b5" stroke-width="2"><circle cx="551" cy="678" r="8"/><circle cx="578" cy="688" r="8"/><circle cx="542" cy="704" r="8"/><circle cx="568" cy="714" r="8"/><path stroke-width="1" d="M548 675l5 4M575 685l5 4M539 701l5 4"/></g>
<g stroke="#bbb" stroke-dasharray="6 2"><ellipse cx="450" cy="637" rx="8" ry="6"/><ellipse cx="450" cy="637" rx="3" ry="4"/><ellipse cx="495" cy="653" rx="8" ry="6"/><ellipse cx="495" cy="653" rx="3" ry="4"/><ellipse cx="438" cy="672" rx="8" ry="6"/><ellipse cx="438" cy="672" rx="3" ry="4"/><ellipse cx="482" cy="687" rx="8" ry="6"/><ellipse cx="482" cy="687" rx="3" ry="4"/><ellipse cx="518" cy="662" rx="8" ry="6"/><ellipse cx="508" cy="690" rx="6" ry="8"/></g>
<path d="M740 283l10-9M742 276l6 5M718 306v18M711 325h14" stroke="#17b51c" stroke-width="2" stroke-dasharray="3 1"/>
<g class="dn">
<text transform="translate(562 376) rotate(35)">DN20</text><text transform="translate(652 385) rotate(35)">DN25</text><text transform="translate(632 418) rotate(33)">DN20</text><text transform="translate(604 452) rotate(30)">DN35</text><text transform="translate(722 436) rotate(37)">DN32</text><text transform="translate(854 450) rotate(37)">DN32</text><text transform="translate(927 371) rotate(40)">DN25</text><text transform="translate(932 242) rotate(42)">DN25</text><text transform="translate(600 500) rotate(28)">DN25</text><text transform="translate(548 512) rotate(-62)">DN25</text><text transform="translate(523 432) rotate(-62)">DN100</text><text transform="translate(547 568) rotate(25)">DN25</text><text transform="translate(624 603) rotate(25)">DN25</text><text transform="translate(529 628) rotate(22)">DN25</text><text transform="translate(602 658) rotate(20)">DN25</text><text transform="translate(638 696) rotate(22)">DN25</text><text transform="translate(661 533) rotate(28)">DN25</text><text transform="translate(681 497) rotate(32)">DN32</text><text transform="translate(738 502) rotate(32)">DN32</text><text transform="translate(792 536) rotate(32)">DN40</text><text transform="translate(874 590) rotate(32)">DN50</text><text transform="translate(931 622) rotate(32)">DN50</text><text transform="translate(931 510) rotate(37)">DN32</text><text transform="translate(686 594) rotate(28)">DN25</text><text transform="translate(484 379) rotate(-55)">1.5</text><text transform="translate(500 354) rotate(-55)">1</text><text transform="translate(551 280) rotate(-50)">3.5</text>
</g></svg></div></div>
</div>
</section>

<p class="note">第二步：在状态栏命令行里输入 applo<br>后点击“关闭”</p>

<section class="shot shot-b">
<nav class="menu">
<svg class="ic"><use href="#i-app"/></svg>
<button disabled>文件<span>(<u>F</u>)</span></button><button disabled>编辑<span>(<u>E</u>)</span></button><button disabled>视图<span>(<u>V</u>)</span></button><button disabled>插入<span>(<u>I</u>)</span></button><button disabled>格式<span>(<u>O</u>)</span></button><button disabled>工具<span>(<u>T</u>)</span></button><button disabled>绘图<span>(<u>D</u>)</span></button><button disabled>标注<span>(<u>N</u>)</span></button><button disabled>修改<span>(<u>M</u>)</span></button><button disabled><span>ET</span>扩展工具<span>(<u>X</u>)</span></button><button disabled>窗口<span>(<u>W</u>)</span></button><button disabled>帮助<span>(<u>H</u>)</span></button>
</nav>
<div class="bar">
<div class="band"><i class="grip"></i>
<button class="tb" aria-label="新建"><svg><use href="#i-new"/></svg></button><button class="tb" aria-label="打开"><svg><use href="#i-open"/></svg></button><button class="tb" aria-label="保存"><svg><use href="#i-save"/></svg></button><i class="sep"></i>
<button class="tb" aria-label="打印"><svg><use href="#i-print"/></svg></button><button class="tb" aria-label="预览"><svg><use href="#i-preview"/></svg></button><button class="tb" aria-label="发布"><svg><use href="#i-publish"/></svg></button><i class="sep"></i>
<button class="tb" aria-label="剪切"><svg><use href="#i-cut"/></svg></button><button class="tb" aria-label="复制"><svg><use href="#i-copy"/></svg></button><button class="tb" aria-label="粘贴"><svg><use href="#i-paste"/></svg></button><button class="tb" aria-label="特性匹配"><svg><use href="#i-brush"/></svg></button><button class="tb" aria-label="块编辑"><svg><use href="#i-bolt"/></svg></button><i class="sep"></i>
<button class="tb" aria-label="放弃"><svg><use href="#i-undo-off"/></svg></button><button class="tb slim" aria-label="放弃列表"><svg><use href="#i-drop-off"/></svg></button><button class="tb" aria-label="重做"><svg><use href="#i-redo"/></svg></button><button class="tb slim" aria-label="重做列表"><svg><use href="#i-drop-off"/></svg></button><i class="sep"></i>
<button class="tb" aria-label="平移"><svg><use href="#i-pan"/></svg></button><button class="tb" aria-label="缩放"><svg><use href="#i-zoom"/></svg></button><button class="tb" aria-label="窗口缩放"><svg><use href="#i-zoomwin"/></svg></button><button class="tb" aria-label="上一个"><svg><use href="#i-zoomprev"/></svg></button><i class="sep"></i>
<button class="tb" aria-label="特性"><svg><use href="#i-props"/></svg></button><button class="tb" aria-label="设计中心"><svg><use href="#i-dc"/></svg></button><button class="tb" aria-label="工具选项板"><svg><use href="#i-tp"/></svg></button><button class="tb" aria-label="图纸集"><svg><use href="#i-sheet"/></svg></button><button class="tb" aria-label="标记集"><svg><use href="#i-markup"/></svg></button><button class="tb" aria-label="计算器"><svg><use href="#i-calc"/></svg></button><i class="sep"></i>
<button class="tb" aria-label="帮助"><svg><use href="#i-help"/></svg></button></div>
<div class="band"><i class="grip"></i><button class="tb" aria-label="文字样式"><svg><use href="#i-style"/></svg></button>
<div class="combo off w105"><select aria-label="样式" disabled><option>_TEL_DIM</option></select><b class="arr"><svg><use href="#c-down"/></svg></b></div><i class="sep"></i><button class="tb" aria-label="标注样式"><svg><use href="#i-dim"/></svg></button></div>
</div>
<div class="bar">
<div class="band"><i class="grip"></i><button class="tb" aria-label="图层"><svg><use href="#i-layers"/></svg></button>
<div class="combo off mixed w320"><svg class="st"><use href="#i-bulb"/></svg><svg class="st"><use href="#i-sun"/></svg><svg class="st"><use href="#i-freeze"/></svg><svg class="st"><use href="#i-lock"/></svg><i class="sw red"></i><select aria-label="图层" disabled><option>自喷</option></select><b class="arr"><svg><use href="#c-down"/></svg></b></div>
<button class="tb" aria-label="置为当前"><svg><use href="#i-laycur"/></svg></button><button class="tb" aria-label="上一个图层"><svg><use href="#i-layprev"/></svg></button></div>
<div class="band"><i class="grip"></i>
<div class="combo off w160"><i class="sw red"></i><select aria-label="颜色" disabled><option>ByLayer</option></select><b class="arr"><svg><use href="#c-down"/></svg></b></div><i class="sep"></i>
<div class="combo off w170"><i class="ln long"></i><select aria-label="线型" disabled><option>ByLayer</option></select><b class="arr"><svg><use href="#c-down"/></svg></b></div><i class="sep"></i>
<div class="combo off w160"><i class="ln"></i><select aria-label="线宽" disabled><option>ByLayer</option></select><b class="arr"><svg><use href="#c-down"/></svg></b></div></div>
</div>
<div class="bar">
<div class="band"><i class="grip"></i><button class="tb" aria-label="工具一"><svg><use href="#i-t1"/></svg></button><button class="tb" aria-label="工具二"><svg><use href="#i-t2"/></svg></button><button class="tb" aria-label="工具三"><svg><use href="#i-t3"/></svg></button><button class="tb" aria-label="工具四"><svg><use href="#i-t4"/></svg></button><button class="tb" aria-label="工具五"><svg><use href="#i-t5"/></svg></button><button class="tb" aria-label="工具六"><svg><use href="#i-t6"/></svg></button></div>
<div class="band"><i class="grip"></i><div class="combo off mixed w187"><select aria-label="工作空间" disabled><option>AutoCAD 默认</option></select><b class="arr"><svg><use href="#c-down"/></svg></b></div><button class="tb" aria-label="设置"><svg><use href="#i-gear"/></svg></button><button class="tb" aria-label="主页"><svg><use href="#i-home"/></svg></button></div>
<div class="band"><i class="grip"></i><button class="tb" aria-label="文字一"><svg><use href="#i-abc1"/></svg></button><button class="tb" aria-label="文字二"><svg><use href="#i-abc2"/></svg></button><button class="tb" aria-label="文字三"><svg><use href="#i-abc3"/></svg></button><button class="tb" aria-label="文字四"><svg><use href="#i-abc4"/></svg></button></div>
<div class="band"><i class="grip"></i><button class="tb" aria-label="镜像"><svg><use href="#i-mir"/></svg></button><button class="tb" aria-label="旋转"><svg><use href="#i-rot"/></svg></button><i class="sep"></i><button class="tb" aria-label="图像一"><svg><use href="#i-img1"/></svg></button><button class="tb" aria-label="图像二"><svg><use href="#i-img2"/></svg></button><button class="tb" aria-label="查找"><svg><use href="#i-globe"/></svg></button><button class="tb" aria-label="折断线"><svg><use href="#i-pulse"/></svg></button><i class="sep"></i><button class="tb" aria-label="快速选择"><svg><use href="#i-flash"/></svg></button><i class="sep"></i><button class="tb" aria-label="移动"><svg><use href="#i-mo"/></svg></button></div>
<div class="band"><i class="grip"></i><button class="tb" aria-label="编辑一"><svg><use href="#i-edit1"/></svg></button><button class="tb" aria-label="编辑二"><svg><use href="#i-edit2"/></svg></button></div>
</div>
<div class="work">
<aside class="palette">
<div class="pgrip"><i></i><button aria-label="关闭">x</button></div>
<div class="pick"><div class="combo mixed w116"><select aria-label="选择对象"><option>无选择</option></select><b class="arr"><svg><use href="#c-down"/></svg></b></div>
<div class="pbtns"><button aria-label="拾取"><svg><use href="#i-pick"/></svg></button><button aria-label="选择"><svg><use href="#i-sel"/></svg></button><button aria-label="快速选择"><svg><use href="#i-filter"/></svg></button></div></div>
<h3>基本<svg><use href="#c-dbl"/></svg></h3>
<table><tr><th>颜色</th><td class="m"><i class="sw red"></i>ByLayer</td></tr><tr><th>图层</th><td>自喷</td></tr><tr><th>线型</th><td class="m"><i class="ln"></i>ByLayer</td></tr><tr><th>线型比例</th><td class="m">1.0</td></tr><tr><th>线宽</th><td class="m"><i class="ln"></i>ByLayer</td></tr><tr><th>厚度</th><td class="m">0.0</td></tr></table>
<h3>打印样式<svg><use href="#c-dbl"/></svg></h3>
<table><tr><th>打印样式</th><td class="ro">随颜色</td></tr><tr><th>打印样式表</th><td class="m">acad.ctb</td></tr><tr><th>打印表<span>...</span></th><td class="ro">模型</td></tr><tr><th>打印表类型</th><td class="ro">颜色相关</td></tr></table>
<h3>视图<svg><use href="#c-dbl"/></svg></h3>
<table><tr><th>圆心 X <span>...</span></th><td class="m ro">4510902.5</td></tr><tr><th>圆心 Y <span>...</span></th><td class="m ro">1057691.2</td></tr><tr><th>圆心 Z <span>...</span></th><td class="m ro">0.0</td></tr><tr><th>高度</th><td class="m ro">15819.7</td></tr><tr><th>宽度</th><td class="m ro">33473.1</td></tr></table>
<h3>其他<svg><use href="#c-dbl"/></svg></h3>
<table><tr><th>打开 UC<span>...</span></th><td>是</td></tr><tr><th>在原点<span>...</span></th><td>否</td></tr><tr><th>每个视<span>...</span></th><td>是</td></tr><tr><th>UCS 名称</th><td class="ro"></td></tr></table>
</aside>
<div class="vside"><div class="vbar"><i class="vgrip"></i>
<button aria-label="直线"><svg><use href="#i-line"/></svg></button><button aria-label="构造线"><svg><use href="#i-xline"/></svg></button><button aria-label="多段线"><svg><use href="#i-pline"/></svg></button><button aria-label="多边形"><svg><use href="#i-poly"/></svg></button><button aria-label="矩形"><svg><use href="#i-rect"/></svg></button><button aria-label="圆弧"><svg><use href="#i-arc"/></svg></button><button aria-label="圆"><svg><use href="#i-circ"/></svg></button><button aria-label="修订云线"><svg><use href="#i-cloud"/></svg></button><button aria-label="样条曲线"><svg><use href="#i-spline"/></svg></button><button aria-label="椭圆"><svg><use href="#i-ell"/></svg></button><button aria-label="椭圆弧"><svg><use href="#i-ellarc"/></svg></button><button aria-label="插入块"><svg><use href="#i-ins"/></svg></button><button aria-label="创建块"><svg><use href="#i-blk"/></svg></button><button aria-label="点"><svg><use href="#i-pt"/></svg></button><button aria-label="图案填充"><svg><use href="#i-hatch"/></svg></button><button aria-label="渐变色"><svg><use href="#i-grad"/></svg></button><button aria-label="面域"><svg><use href="#i-region"/></svg></button><button aria-label="表格"><svg><use href="#i-table"/></svg></button><button aria-label="多行文字"><svg><use href="#i-mtext"/></svg></button></div></div>
<div class="doc"><div class="tabs"><button>Drawing1</button><button class="on">喷洒0621</button></div>
<div class="canvas"><svg width="567" height="496" viewBox="383 848 567 496" fill="none">
<path stroke="#17b51c" d="M383 943H400L386 957M383 957H425M383 1156L425 1175M383 1161L425 1180M425 1220L383 1330M425 1245L393 1344M470 1335L466 1344M700 1335L690 1344M788 1335L805 1344M912 1335L906 1344"/>
<path stroke="#eee" d="M383 924h3v14h-3M398 1027L425 1042M403 1028L383 1075M400 1025l8 8M425 1055L383 1150M425 1065L392 1155L425 1170M425 1085L387 1140M383 1131L425 1147M383 1166L417 1182L383 1270M383 1173L412 1187L383 1255M383 1209L425 1224M383 1309L425 1321M398 1300V1344M396 1290l8 12h-12zM400 1272L425 1276M398 1263L425 1269M530 1335L560 1344M590 1338a7 7 0 0 0 14 0M644 1335L660 1342M690 1335L670 1344M740 1337L760 1344M903 1335L898 1344M922 1335L915 1344"/>
<path stroke="#e51be5" d="M425 1098L397 1151L417 1161L421 1150M422 1233L405 1282M407 1273L396 1305L425 1313M492 1337L505 1341"/>
<path stroke="#19cbd4" d="M423 1242L416 1256L425 1259M405 1285L400 1302M405 1284l8 4M415 1289Q421 1298 419 1308"/>
<path stroke="#bb1717" d="M475 1337L500 1343M600 1335L596 1344"/>
</svg></div></div>
<form class="dlg" onsubmit="return false">
<header><h2>加载/卸载应用程序</h2>
<div class="badge"><svg width="92" height="32" viewBox="0 0 92 32"><path d="M2 13l7-2-3-4 10 0 2-4 9 2 5-4 8 3 8-3 6 3 9-2 5 4 9 0-2 4 9 0-2 4 6 2-7 3 4 4-10-1 3 5 8 2-7 3-8-4-5-5-9 2-7-2-8 3-8-3-9 2-7-4-9 1 1-4-9-1 2-4z" fill="url(#gc)" stroke="#444"/></svg><span>五笔加加</span></div>
<button class="cap" aria-label="帮助">?</button><button class="cap close" aria-label="关闭">×</button></header>
<div class="dbody">
<div class="look"><label for="look">查找范围<span>(<u>I</u>)</span>:</label><div class="combo mixed w222"><svg class="st"><use href="#i-fopen"/></svg><select id="look"><option>CAD图</option></select><b class="arr"><svg><use href="#c-down"/></svg></b></div>
<div class="lbtns"><button aria-label="后退"><svg><use href="#i-back"/></svg></button><button aria-label="向上"><svg><use href="#i-up"/></svg></button><button aria-label="新建文件夹"><svg><use href="#i-newf"/></svg></button><button class="vw" aria-label="查看"><svg><use href="#i-views"/></svg><i></i></button></div>
<div class="ltools"><button aria-label="查找文件"><svg><use href="#i-find"/></svg></button><button aria-label="收藏"><svg><use href="#i-fav"/></svg></button></div></div>
<div class="files"><div class="cols"><ul><li><svg><use href="#i-folder"/></svg>空调工程</li><li><svg><use href="#i-folder"/></svg>弱电安装</li><li><svg><use href="#i-folder"/></svg>弱电平面图 ( 图元30万 )</li><li><svg><use href="#i-folder"/></svg>水0611版</li><li><svg><use href="#i-folder"/></svg>图元太多处理过的图</li><li><svg><use href="#i-folder"/></svg>消防工程</li></ul>
<ul><li><svg><use href="#i-folder"/></svg>雅居工程</li><li><svg><use href="#i-folder"/></svg>榆次图纸</li><li><svg><use href="#i-folder"/></svg>中国遥感卫星科研楼-亚太安装</li><li class="sel"><svg><use href="#i-file"/></svg><em>exm</em></li></ul></div>
<div class="hs"><button class="sb l" aria-label="左"><svg><use href="#c-down"/></svg></button><i class="thumb short"></i><button class="sb r" aria-label="右"><svg><use href="#c-down"/></svg></button></div></div>
<div class="fields"><label for="fn">文件名<span>(<u>N</u>)</span>:</label><input id="fn" type="text" value="exm"><button class="xp def">加载<span>(<u>L</u>)</span></button>
<label for="ft">文件类型<span>(<u>T</u>)</span>:</label><div class="combo mixed"><select id="ft"><option>AutoCAD 应用程序 (*.arx;*.lsp;*.dvb;</option></select><b class="arr"><svg><use href="#c-down"/></svg></b></div><i class="mark mark-load"></i></div>
<div class="lower"><div class="loaded"><div class="ltabs"><button class="on">已加载的应用程序</button><button>历史记录列表</button></div>
<div class="lpanel"><div class="grid"><div class="tblwrap"><table><thead><tr><th>文件</th><th>路径</th></tr></thead><tbody><tr><td>acad.mnl</td><td>C:\Documents and Settings...</td></tr><tr><td>acad200...</td><td>C:\Program Files\AutoCAD ...</td></tr><tr><td>acad200...</td><td>C:\Program Files\AutoCAD ...</td></tr><tr><td>acaddoc...</td><td>C:\Tangent\TElec7\SYS\</td></tr><tr><td>AcApp.arx</td><td>C:\Program Files\AutoCAD ...</td></tr><tr class="act"><td>AcDblCl...</td><td>C:\Program Files\AutoCAD ...</td></tr></tbody></table>
<div class="vs"><button class="sb u" aria-label="上"><svg><use href="#c-down"/></svg></button><i class="thumb"></i><button class="sb d" aria-label="下"><svg><use href="#c-down"/></svg></button></div></div>
<div class="hs"><button class="sb l" aria-label="左"><svg><use href="#c-down"/></svg></button><i class="thumb wide"></i><button class="sb r" aria-label="右"><svg><use href="#c-down"/></svg></button></div></div></div></div>
<div class="side"><div class="chk"><input type="checkbox" id="hist"><label for="hist">添加到历史记录<span>(<u>A</u>)</span></label></div>
<button class="xp" disabled>卸载<span>(<u>U</u>)</span></button>
<fieldset><legend>启动组</legend><svg><use href="#i-case"/></svg><button class="xp">内容<span>(<u>O</u>)...</span></button></fieldset></div></div>
<footer><output class="status"></output><button class="xp">关闭<span>(<u>C</u>)</span></button><button class="xp">帮助<span>(<u>H</u>)</span></button></footer>
</div></form>
</div>
</section>
</main>
</body>
</html>
```
FILE: styles.css
```css
*, *::before, *::after { box-sizing: border-box; }
body { margin: 0; background: #fff; color: #000; font: 13px/16px "Liberation Serif", "Noto Sans CJK SC", serif; }
button, select, input { font: inherit; color: inherit; margin: 0; padding: 0; border: 0; background: none; border-radius: 0; }
button { white-space: nowrap; }
button span, label span, th span { font: 11px/12px "Liberation Mono", monospace; }
i, em { font-style: normal; }
svg { display: block; flex: none; }
.defs { position: absolute; width: 0; height: 0; }
.page { display: flex; flex-direction: column; min-height: 100vh; padding-top: 87px; overflow: hidden; }
.shot { background: #ece9d8; overflow: hidden; display: flex; flex-direction: column; }
.shot-a { margin-left: 121px; }
.shot-b { margin-left: 117px; flex: 1; }
.shot-b > * { margin-left: -2px; }
.titleline { height: 4px; background: #0a50d8; }

.menu { display: flex; align-items: center; height: 22px; padding-left: 4px; gap: 12px; border-bottom: 1px solid #f8f7f0; }
.menu .ic { width: 18px; height: 18px; margin-right: -7px; }
.menu button:disabled { color: #a5a290; }

.bar { display: flex; height: 30px; }
.band { display: flex; align-items: center; flex: none; padding: 0 6px 0 5px; border-top: 1px solid #fff; border-right: 1px solid #aca899; border-bottom: 1px solid #bdb9a6; }
.band:last-child { flex: 1 0 auto; }
.grip { width: 6px; height: 25px; margin-right: 3px; border: solid #b9b5a2; border-width: 0 1px; box-shadow: inset 1px 0 #fff, inset -1px 0 #fff; flex: none; }
.tb { width: 24px; height: 25px; display: flex; align-items: center; justify-content: center; flex: none; }
.tb.slim { width: 14px; }
.tb svg { width: 18px; height: 18px; }
.raised { background: #f7f5ee; border: 1px solid #d5d1c0; border-radius: 2px; }
.sep { width: 8px; height: 21px; flex: none; background: linear-gradient(90deg, transparent 3px, #c5c1ae 3px, #c5c1ae 4px, #fff 4px, #fff 5px, transparent 5px); }

.combo { position: relative; display: flex; align-items: center; flex: none; height: 24px; border: 1px solid #7f9db9; background: #fff; font: 11px/16px "Liberation Mono", monospace; }
.combo.mixed { font: 13px/16px "Liberation Serif", "Noto Sans CJK SC", serif; }
.bar .combo.mixed { font-size: 12px; }
.combo select { flex: 1; min-width: 0; height: 100%; padding-left: 4px; appearance: none; opacity: 1; }
.combo .arr { display: flex; align-items: center; justify-content: center; width: 16px; align-self: stretch; margin: 1px; background: linear-gradient(#dbe5fd, #b5c8f6); border-radius: 2px; color: #4d6185; flex: none; pointer-events: none; }
.arr svg { width: 10px; height: 8px; }
.combo .st { width: 18px; height: 18px; }
.combo.off { background: #ebe8d8; border-color: #c9c7ba; color: #a5a290; }
.combo.off .arr { background: #f2f0e6; border: 1px solid #dcd9cb; color: #c5c2b4; }
.w105 { width: 106px; }
.w116 { width: 116px; }
.w160 { width: 158px; }
.w170 { width: 170px; }
.w187 { width: 187px; }
.w222 { width: 222px; }
.w320 { width: 320px; }
.sw { width: 11px; height: 11px; border: 1px solid #222; background: #fff; flex: none; margin-left: 5px; }
.sw.red { background: #f00; border-color: #900; }
.st + .sw { margin-left: 0; }
.ln { width: 38px; height: 1px; background: #222; flex: none; margin-left: 5px; }
.ln.long { width: 64px; }
.bar .ln + select { padding-left: 4px; }
.combo .st:first-child { margin-left: 3px; }

.work { display: flex; position: relative; flex: 1; }
.palette { width: 236px; flex: none; padding: 6px 16px 8px 6px; background: #ecebe7; border-right: 2px solid #777468; }
.pgrip { display: flex; align-items: center; gap: 5px; height: 12px; margin: 0 -5px 7px 0; }
.pgrip i { flex: 1; height: 6px; border: solid #b9b5a2; border-width: 1px 0; }
.pgrip button { width: 11px; height: 11px; border: 1px solid #99a; font: bold 11px/8px "Liberation Sans", sans-serif; }
.pick { display: flex; gap: 6px; height: 25px; margin: 0 0 12px 13px; }
.palette .pick .combo { height: 25px; }
.pbtns { display: flex; flex: 1; border: 1px solid #c9c6b4; background: #efede4; }
.pbtns button { flex: 1; display: flex; align-items: center; justify-content: center; }
.pbtns button + button { border-left: 1px solid #d3d0c0; }
.pbtns svg { width: 18px; height: 18px; }
.palette h3 { display: flex; align-items: center; justify-content: space-between; height: 18px; margin: 0 0 0 13px; padding: 0 12px 0 7px; background: #c5c2ae; color: #fff; font-size: 13px; line-height: 16px; border-radius: 5px 3px 0 0; }
.palette h3.on { background: #316ac5; }
h3 svg { width: 10px; height: 12px; }
.palette table { width: 182px; margin: 0 0 7px 31px; border-spacing: 0; table-layout: fixed; border-left: 1px solid #c9c6b4; border-right: 1px solid #c9c6b4; }
.palette th, .palette td { height: 17px; padding: 0 0 0 4px; line-height: 15px; border-bottom: 1px solid #cfccbc; text-align: left; font-weight: 400; white-space: nowrap; vertical-align: middle; }
.palette th { position: relative; width: 73px; padding-left: 3px; border-right: 1px solid #cfccbc; }
.palette td { padding-left: 2px; background: #fff; }
.palette td.m { font: 11px/15px "Liberation Mono", monospace; }
.palette td.ro { background: #ecebe7; }
td .sw { display: inline-block; margin: 0 5px 0 1px; vertical-align: -1px; }
td .ln { display: inline-block; width: 43px; margin: 0 4px 0 3px; vertical-align: 3px; }

.mark { position: absolute; z-index: 2; border: 3px solid #f01010; border-radius: 6px; pointer-events: none; }
.mark-sel { left: -5px; top: -6px; width: 118px; height: 34px; }
.mark-col { left: -9px; top: -3px; width: 134px; height: 21px; }
.mark-row { left: -11px; top: -3px; width: 147px; height: 20px; }
.mark-load { left: -5px; top: -3px; width: 442px; height: 39px; border-radius: 8px; }

.vside { width: 31px; flex: none; padding-left: 1px; border-right: 1px solid #c9c6b4; }
.vbar { display: flex; flex-direction: column; justify-content: space-between; align-items: center; height: 461px; padding-bottom: 6px; border-right: 1px solid #b9b5a2; border-bottom: 1px solid #b9b5a2; }
.vgrip { width: 22px; height: 6px; margin-top: 2px; border: solid #b9b5a2; border-width: 1px 0; }
.vbar button { width: 20px; height: 20px; display: grid; place-items: center; }
.vbar svg { width: 18px; height: 18px; }

.doc { flex: 1; min-width: 0; display: flex; flex-direction: column; border-left: 1px solid #777468; }
.tabs { display: flex; gap: 3px; height: 21px; flex: none; border-bottom: 2px solid #8d8a7c; }
.tabs button { padding: 0 8px; border-right: 2px solid #55524a; border-bottom: 1px solid #8d8a7c; font: 11px/16px "Liberation Mono", "Noto Sans CJK SC", monospace; }
.tabs button.on { border: 0; border-left: 1px solid #777; padding: 0 8px; background: #fbe4e8; color: #2a20d8; font: 13px/16px "Liberation Serif", "Noto Sans CJK SC", serif; }
.canvas { flex: 1; background: #000; overflow: hidden; }
.dn text { font: 15px "Liberation Serif", serif; fill: #e0e0e0; text-anchor: middle; }

.note { position: relative; z-index: 3; margin: -56px 0 4px; padding-left: 84px; text-indent: 34px; font-size: 17px; line-height: 26px; font-weight: 300; white-space: nowrap; color: #000; }

.dlg { position: absolute; left: 306px; top: 15px; width: 570px; border: 3px solid #0b41d4; border-top: 0; border-radius: 7px 7px 0 0; background: #ece9d8; }
.dlg header { display: flex; align-items: center; gap: 6px; height: 31px; margin: 0 -3px; padding: 0 1px 0 8px; border-radius: 7px 7px 0 0; background: linear-gradient(#3b8cff, #0859e8 5px, #0458ee 22px, #0a63fb 26px, #0345c8); color: #fff; }
.dlg h2 { flex: 1; margin: 0; font-size: 14px; line-height: 20px; }
.badge { position: relative; width: 92px; height: 32px; }
.badge span { position: absolute; left: 13px; top: 4px; font: italic 16px/20px "Noto Sans CJK SC", sans-serif; color: #fff; }
.cap { width: 22px; height: 22px; border: 1px solid #fff; border-radius: 3px; background: #2f66e6; font: bold 15px/18px "Liberation Sans", sans-serif; }
.cap.close { background: #d8502c; }
.dbody { padding: 15px 0 13px 17px; display: flex; flex-direction: column; align-items: flex-start; }
.look { display: flex; align-items: center; height: 26px; padding-left: 6px; }
.look label { width: 81px; }
.lbtns { display: flex; margin-left: 7px; }
.lbtns button { width: 25px; height: 22px; display: flex; align-items: center; justify-content: center; gap: 2px; }
.lbtns .vw { width: 30px; }
.lbtns svg, .ltools svg { width: 18px; height: 18px; }
.vw i { border: 3px solid transparent; border-top-color: #111; margin-top: 3px; }
.ltools { display: flex; gap: 2px; margin: 0 0 4px 39px; }
.ltools button { width: 24px; height: 22px; display: grid; place-items: center; border: 1px solid #1f4c8b; border-radius: 3px; background: #f7f6f0; }
.files { width: 446px; margin: 9px 0 0 2px; border: 1px solid #7f9db9; background: #fff; }
.cols { display: grid; grid-template-columns: 1fr 1fr; height: 110px; padding: 1px; }
.cols ul { list-style: none; margin: 0; padding: 0; }
.cols li { display: flex; align-items: center; gap: 1px; height: 18px; white-space: nowrap; }
.cols svg { width: 18px; height: 18px; }
.sel em { padding: 0 2px; background: #316ac5; color: #fff; font: 11px/18px "Liberation Mono", monospace; }
.hs { display: flex; justify-content: space-between; align-items: center; height: 18px; background: #f4f3ee; padding: 1px; }
.sb { width: 17px; height: 16px; display: grid; place-items: center; background: linear-gradient(#dbe5fd, #b5c8f6); border: 1px solid #c3d2f8; border-radius: 2px; color: #4d6185; flex: none; }
.sb svg { width: 10px; height: 8px; }
.l svg { transform: rotate(90deg); }
.r svg { transform: rotate(-90deg); }
.u svg { transform: rotate(180deg); }
.thumb { height: 16px; border: 1px solid #a9bff0; border-radius: 2px; background: repeating-linear-gradient(90deg, #fff 0 1px, #9db5ec 1px 2px) center / 8px 7px no-repeat, #c4d3fa; }
.hs .short { width: 80px; margin-left: 246px; margin-right: auto; }
.hs .wide { flex: 1; margin: 0 17px 0 2px; }
.fields { position: relative; display: grid; grid-template-columns: 87px 256px 93px; align-items: center; row-gap: 3px; padding: 7px 0 0 3px; }
.fields input, .fields .combo { height: 23px; border: 1px solid #7f9db9; background: #fff; padding: 0 3px; }
.fields input { font: 11px/16px "Liberation Mono", monospace; }
.fields .combo { height: 22px; padding: 0; }
.fields .xp { margin-left: 17px; width: 76px; height: 23px; }
.xp { width: 78px; height: 21px; border: 1px solid #123f73; border-radius: 3px; background: linear-gradient(#fff, #eeece2 80%, #dcd6c6); line-height: 16px; }
.xp.def { border: 2px solid #5a83cc; outline: 1px solid #123f73; outline-offset: -1px; }
.xp:disabled { border-color: #c9c7ba; background: #f5f4ea; color: #a5a290; }
.lower { display: flex; gap: 8px; margin-top: 12px; }
.loaded { width: 320px; }
.ltabs { display: flex; height: 21px; }
.ltabs button { height: 20px; align-self: flex-end; padding: 0 3px; border: 1px solid #919b9c; border-bottom: 0; border-radius: 2px 2px 0 0; background: #f5f4ec; }
.ltabs .on { position: relative; height: 22px; margin-bottom: -1px; padding: 0 7px; border-top: 3px solid #f0a63c; background: #fcfcfa; line-height: 16px; }
.lpanel { padding: 6px 8px 6px 10px; border: 1px solid #919b9c; background: #fbfbf8; }
.grid { border: 1px solid #7f9db9; background: #fff; padding: 1px; }
.tblwrap { display: flex; height: 104px; overflow: hidden; }
.tblwrap table { flex: 1; border-spacing: 0; table-layout: fixed; align-self: flex-start; color: #a5a290; }
.tblwrap th { height: 21px; padding: 0 0 0 10px; text-align: left; font-weight: 400; color: #000; background: linear-gradient(#f2f0e6, #ebe8d8); border-bottom: 1px solid #c9c5b0; }
.tblwrap th:first-child { width: 89px; border-right: 1px solid #d8d5c5; }
.tblwrap td { padding: 0 0 0 12px; height: 14px; font: 10px/14px "Liberation Mono", monospace; white-space: nowrap; overflow: hidden; }
.act { color: #000; }
.vs { display: flex; flex-direction: column; width: 17px; background: #f4f3ee; }
.vs .thumb { height: 9px; margin: 1px 0; background: #c4d3fa; }
.vs .d { margin-top: auto; }
.grid .hs { margin-right: 9px; height: 18px; }
.side { display: flex; flex-direction: column; padding-top: 7px; }
.chk { display: flex; align-items: center; height: 16px; white-space: nowrap; gap: 3px; }
.chk input { appearance: none; width: 14px; height: 14px; border: 1px solid #1d5281; background: #f8f8f5; }
.side > .xp { margin: 14px 0 8px 16px; }
.side fieldset { width: 97px; margin: 0 0 0 6px; padding: 8px 0 9px 9px; border: 1px solid #d0d0bf; border-radius: 4px; }
.side legend { padding: 0 1px; color: #0046d5; }
.side fieldset svg { width: 32px; height: 32px; margin: 0 0 6px 18px; }
.dlg footer { display: flex; align-items: flex-end; margin-top: 8px; gap: 9px; }
.status { width: 256px; height: 29px; border: 2px solid; border-color: #9d9a8a #fff #fff #9d9a8a; }
```
